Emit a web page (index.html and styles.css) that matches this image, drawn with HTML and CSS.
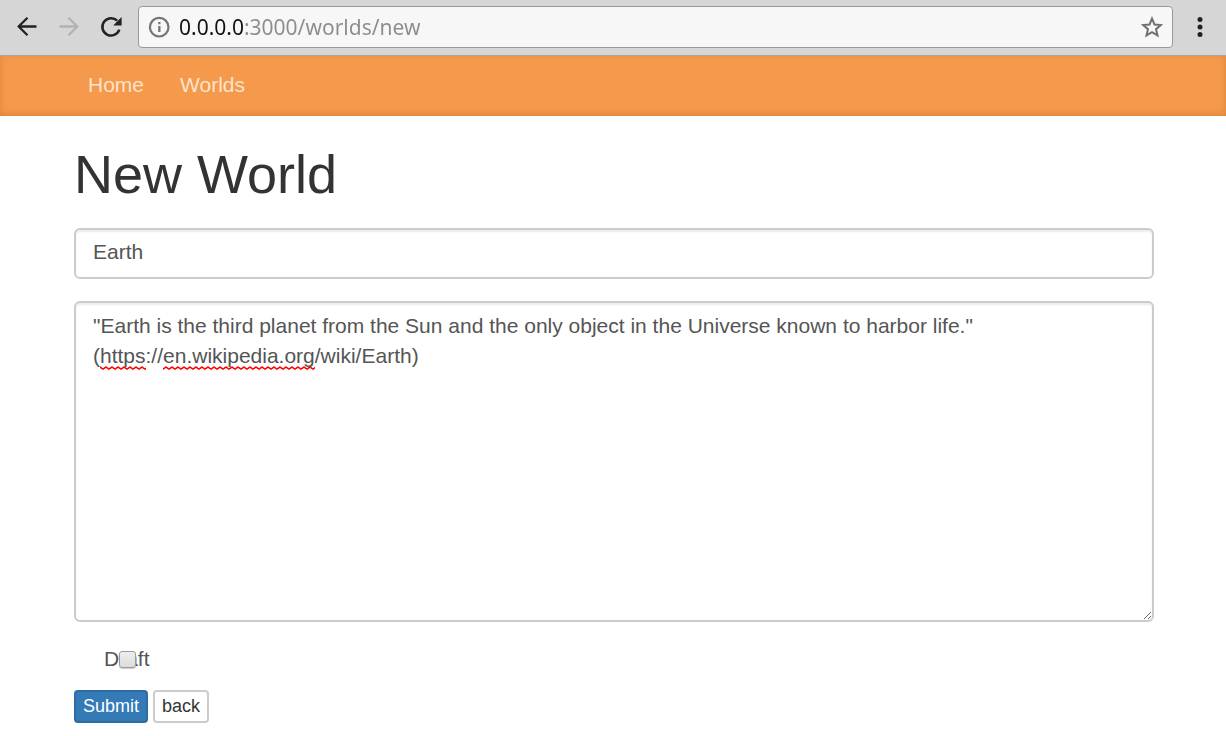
FILE: index.html
```html
<!DOCTYPE html>
<html lang="en">
<head>
<meta charset="utf-8">
<meta name="viewport" content="width=device-width, initial-scale=1">
<title>New World</title>
<link rel="stylesheet" href="styles.css">
</head>
<body>
<header class="toolbar">
  <button class="tool" type="button" aria-label="Back">
    <svg width="22" height="22" viewBox="0 0 22 22" fill="none" stroke="#222" stroke-width="2.300"><path d="M20.500 10.500H3M11.500 1.700 2.700 10.500l8.800 8.800"/></svg>
  </button>
  <button class="tool" type="button" aria-label="Forward" disabled>
    <svg width="22" height="22" viewBox="0 0 22 22" fill="none" stroke="#b2b2b2" stroke-width="2.300"><path d="M1.500 10.500H19M10.500 1.700l8.800 8.800-8.800 8.800"/></svg>
  </button>
  <button class="tool" type="button" aria-label="Reload">
    <svg width="22" height="22" viewBox="0 0 22 22"><path d="M19.300 13.700A8.700 8.700 0 1 1 17.200 4.700" fill="none" stroke="#222" stroke-width="2.500"/><path d="M21.600 1v8.400h-8.400z" fill="#222"/></svg>
  </button>
  <div class="omnibox">
    <svg width="22" height="22" viewBox="0 0 22 22"><circle cx="11.200" cy="11.200" r="9.300" fill="none" stroke="#757575" stroke-width="2.200"/><path d="M10.200 6h2.300v2.200h-2.300zM10.200 10h2.300v6h-2.300z" fill="#757575"/></svg>
    <input class="address" type="text" aria-label="Address" value="0.0.0.0:3000/worlds/new" spellcheck="false">
    <button class="star" type="button" aria-label="Bookmark">
      <svg width="22" height="22" viewBox="0 0 22 22" fill="none" stroke="#707070" stroke-width="2"><path d="m11 2.600 2.500 5.900 6.300.5-4.800 4.200 1.500 6.200-5.500-3.300-5.500 3.300 1.500-6.200L2.200 9l6.300-.5z"/></svg>
    </button>
  </div>
  <button class="tool menu" type="button" aria-label="Menu">
    <svg width="6" height="22" viewBox="0 0 6 22" fill="#222"><circle cx="3" cy="3.500" r="2.500"/><circle cx="3" cy="11" r="2.500"/><circle cx="3" cy="18.500" r="2.500"/></svg>
  </button>
</header>
<nav class="navbar">
  <a href="#home">Home</a>
  <a href="#worlds">Worlds</a>
</nav>
<main class="container">
  <h1>New World</h1>
  <form>
    <input class="control name" type="text" aria-label="Name" value="Earth">
    <div class="description">
      <textarea class="control" aria-label="Description" spellcheck="false">"Earth is the third planet from the Sun and the only object in the Universe known to harbor life."
(https://en.wikipedia.org/wiki/Earth)</textarea>
      <svg class="squiggles" width="240" height="4" aria-hidden="true">
        <defs><pattern id="wave" width="6" height="4" patternUnits="userSpaceOnUse"><path d="M-1.500 1 0 1 3 3 6 1 7.500 1" fill="none" stroke="#f00" stroke-width="1.500"/></pattern></defs>
        <rect width="46" height="4" fill="url(#wave)"/>
        <rect x="63" width="152" height="4" fill="url(#wave)"/>
      </svg>
    </div>
    <label class="draft" for="draft"><span>Draft</span><input id="draft" type="checkbox"></label>
    <div class="actions">
      <button class="btn primary" type="submit">Submit</button>
      <a class="btn" href="#worlds">back</a>
    </div>
  </form>
</main>
</body>
</html>
```
FILE: styles.css
```css
* { box-sizing: border-box; }

body {
  margin: 0;
  background: #fff;
  color: #333;
  font: 21px/30px "Liberation Sans", Arial, sans-serif;
}

.toolbar {
  display: flex;
  align-items: center;
  gap: 20px;
  padding: 6px 23px 7px 16px;
  background: #d6d6d6;
  border-bottom: 1px solid #a5a5a5;
}

.tool, .star {
  display: flex;
  padding: 0;
  border: 0;
  background: none;
}

.omnibox {
  display: flex;
  flex: 1;
  align-items: center;
  min-width: 0;
  height: 42px;
  margin-left: -4px;
  padding: 0 9px;
  border: 1px solid #999;
  border-radius: 4px;
  background: #f7f7f7;
}

.address {
  flex: 1;
  min-width: 0;
  height: 30px;
  margin-left: 9px;
  padding: 0;
  border: 0;
  outline: 0;
  background: linear-gradient(to right, #111 65px, #8c8c8c 65px);
  background-clip: text;
  -webkit-background-clip: text;
  color: transparent;
  font: 21px/30px "Noto Sans", "Open Sans", sans-serif;
}

.menu { margin-left: 4px; }

.navbar {
  display: flex;
  gap: 36px;
  padding: 14px 88px 16px;
  background: #f5994c;
  box-shadow: inset 0 -2px 7px rgba(120, 60, 0, .2);
}

.navbar a {
  color: #fde3cb;
  text-decoration: none;
}

.container { padding: 0 72px 12px 74px; }

h1 {
  margin: 0;
  padding: 28px 0 24px;
  font-size: 54px;
  font-weight: 400;
  line-height: 60px;
}

.control {
  display: block;
  width: 100%;
  padding: 8px 17px;
  border: 2px solid #ccc;
  border-radius: 6px;
  outline: 0;
  background: #fff;
  box-shadow: inset 0 2px 2px rgba(0, 0, 0, .075);
  color: #555;
  font: inherit;
}

.name {
  height: 51px;
  padding: 7px 17px 10px;
}

.description {
  position: relative;
  margin: 22px 0;
}

textarea.control {
  height: 321px;
  resize: vertical;
}

.squiggles {
  position: absolute;
  top: 65px;
  left: 26px;
  pointer-events: none;
}

.draft {
  position: relative;
  display: inline-block;
  margin-left: 30px;
  color: #555;
}

.draft input {
  position: absolute;
  top: 7px;
  left: 15px;
  width: 17px;
  height: 17px;
  margin: 0;
  appearance: none;
  border: 1px solid #999;
  border-radius: 3px;
  background: linear-gradient(#eee, #dcdcdc);
  box-shadow: 0 1px 1px rgba(0, 0, 0, .2);
}

.actions {
  display: flex;
  gap: 5px;
  margin-top: 16px;
}

.btn {
  padding: 1px 7px 2px;
  border: 2px solid #ccc;
  border-radius: 4px;
  background: #fff;
  color: #333;
  font: 18px/26px "Liberation Sans", Arial, sans-serif;
  text-decoration: none;
}

.primary {
  border-color: #2e6da4;
  background: #337ab7;
  color: #fff;
}
```
